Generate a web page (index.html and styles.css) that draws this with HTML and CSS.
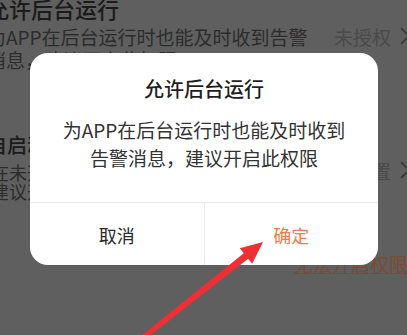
FILE: index.html
```html
<!DOCTYPE html>
<html lang="zh-CN">
<head>
<meta charset="utf-8">
<title>允许后台运行</title>
<link rel="stylesheet" href="styles.css">
</head>
<body>
<div class="screen">
  <div class="item item-first">
    <div class="item-body">
      <div class="item-title">允许后台运行</div>
      <div class="item-desc">为APP在后台运行时也能及时收到告警消息，建议开启此权限</div>
    </div>
    <div class="item-status">
      <span class="status-text">未授权</span>
      <svg class="chevron" width="10" height="18" viewBox="0 0 10 18"><path d="M1 1 L9 9 L1 17" fill="none" stroke="#3a3a3a" stroke-width="1.8"/></svg>
    </div>
  </div>
  <div class="item item-second">
    <div class="item-body">
      <div class="item-title small">自启动</div>
      <div class="item-desc small">在未开启自启动时可能收不到告警，<br>建议开启此权限</div>
    </div>
    <div class="item-status">
      <span class="status-text">去设置</span>
      <svg class="chevron" width="10" height="18" viewBox="0 0 10 18"><path d="M1 1 L9 9 L1 17" fill="none" stroke="#3a3a3a" stroke-width="1.8"/></svg>
    </div>
  </div>
  <div class="link-row"><span class="link">无法开启权限</span></div>
</div>

<div class="dialog">
  <div class="dialog-content">
    <div class="dialog-title">允许后台运行</div>
    <div class="dialog-text">为APP在后台运行时也能及时收到<br>告警消息，建议开启此权限</div>
  </div>
  <div class="dialog-footer">
    <div class="btn btn-cancel">取消</div>
    <div class="btn btn-ok">确定</div>
  </div>
</div>

<svg class="arrow" width="407" height="335" viewBox="0 0 407 335">
  <polygon points="138.4,338 243.8,253.3 239.8,248.2 263,242 252.2,263.8 248.2,258.7 141.6,342" fill="#ee2f36"/>
</svg>
</body>
</html>
```

FILE: styles.css
```css
html, body {
  margin: 0;
  padding: 0;
}
body {
  width: 407px;
  height: 335px;
  overflow: hidden;
  background: #5f5f5f;
  font-family: "Noto Sans CJK SC", "Noto Sans", sans-serif;
  position: relative;
}
.screen {
  margin-left: -13px;
  width: 423px;
}
.item {
  display: flex;
  align-items: center;
  justify-content: space-between;
}
.item-first {
  margin-top: -5px;
}
.item-second {
  margin-top: 62px;
}
.item-body {
  width: 330px;
  flex: 0 0 330px;
}
.item-title {
  font-size: 22px;
  line-height: 26px;
  color: #1b1b1b;
  font-weight: 500;
  white-space: nowrap;
}
.item-title.small {
  font-size: 20px;
  line-height: 24px;
}
.item-desc {
  margin-top: 4px;
  font-size: 19px;
  line-height: 23px;
  color: #2c2c2c;
}
.item-desc.small {
  font-size: 18px;
  line-height: 19px;
  margin-top: 6px;
  padding-left: 4px;
  white-space: nowrap;
}
.item-status {
  display: flex;
  align-items: center;
  gap: 9px;
  padding-top: 6px;
}
.status-text {
  font-size: 19px;
  color: #4a4a4a;
  white-space: nowrap;
}
.chevron {
  display: block;
}
.link-row {
  display: flex;
  justify-content: flex-end;
  margin-top: 52px;
  padding-right: 2px;
}
.link {
  font-size: 19px;
  line-height: 22px;
  color: #7d4a33;
  text-decoration: underline;
  white-space: nowrap;
}
.dialog {
  position: absolute;
  left: 30px;
  top: 53px;
  width: 348px;
  height: 212px;
  background: #fff;
  border-radius: 18px;
  display: flex;
  flex-direction: column;
  overflow: hidden;
}
.dialog-content {
  flex: 1;
  padding-top: 22px;
  text-align: center;
}
.dialog-title {
  font-size: 20px;
  line-height: 28px;
  color: #1f1f1f;
  font-weight: 500;
}
.dialog-text {
  margin-top: 13px;
  font-size: 19px;
  line-height: 28px;
  color: #333;
}
.dialog-footer {
  height: 62px;
  border-top: 1px solid #e8e8e8;
  display: flex;
}
.btn {
  flex: 1;
  display: flex;
  align-items: center;
  justify-content: center;
  font-size: 18px;
  padding-top: 2px;
}
.btn-cancel {
  color: #2a2a2a;
}
.btn-ok {
  color: #f07a4c;
  border-left: 1px solid #ececec;
}
.arrow {
  position: absolute;
  left: 0;
  top: 0;
  pointer-events: none;
}
```
